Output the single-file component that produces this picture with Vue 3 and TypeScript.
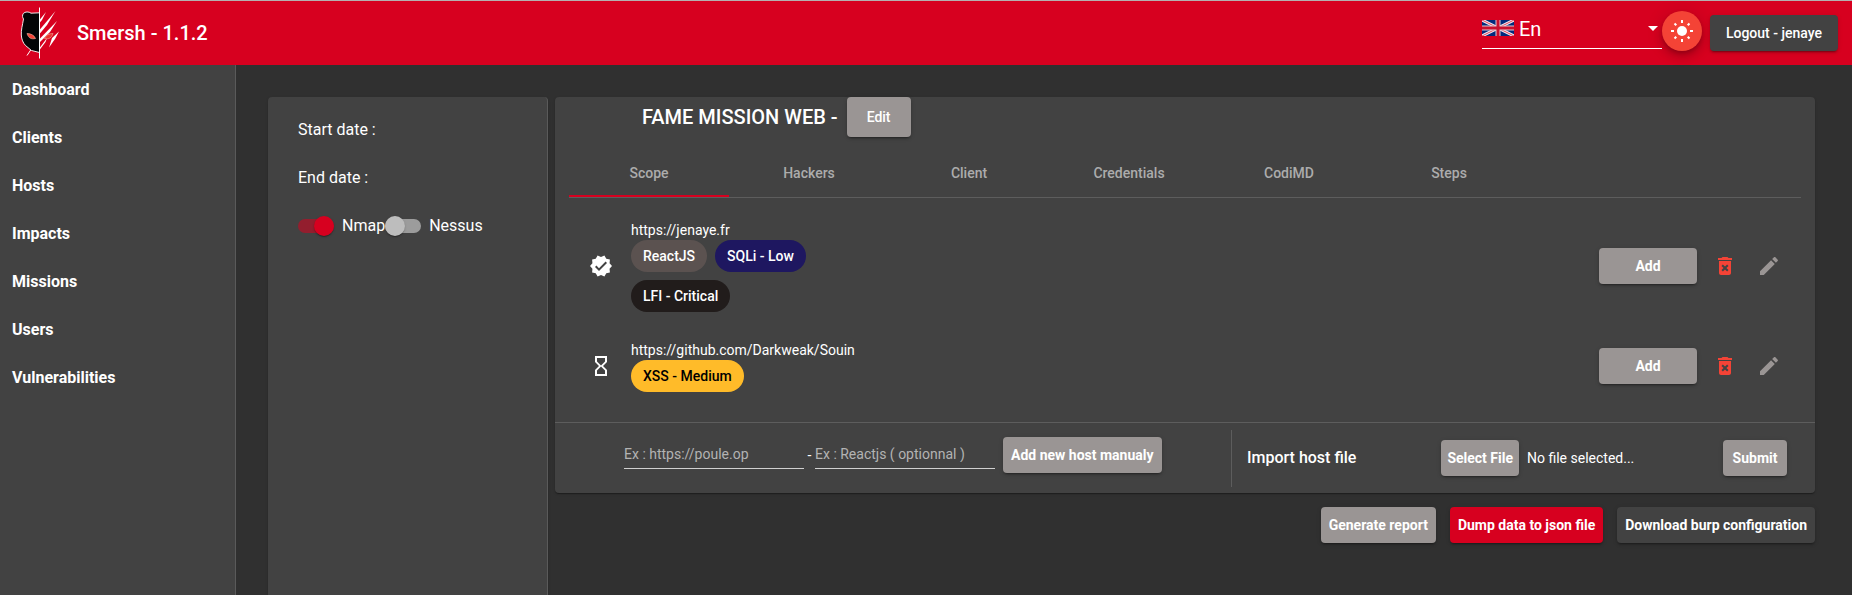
<script setup lang="ts">
import { ref } from 'vue'

interface Tag { label: string; tone: string }
interface Host { url: string; checked: boolean; tags: Tag[] }

const links: string[] = ['Dashboard', 'Clients', 'Hosts', 'Impacts', 'Missions', 'Users', 'Vulnerabilities']
const tabs: string[] = ['Scope', 'Hackers', 'Client', 'Credentials', 'CodiMD', 'Steps']
const activeTab = ref('Scope')
const language = ref('En')
const nmap = ref(true)
const nessus = ref(false)
const hostUrl = ref('')
const technology = ref('')

const hosts: Host[] = [
  {
    url: 'https://jenaye.fr',
    checked: true,
    tags: [
      { label: 'ReactJS', tone: 'tech' },
      { label: 'SQLi - Low', tone: 'low' },
      { label: 'LFI - Critical', tone: 'critical' },
    ],
  },
  {
    url: 'https://github.com/Darkweak/Souin',
    checked: false,
    tags: [{ label: 'XSS - Medium', tone: 'medium' }],
  },
]
</script>

<template>
  <div class="app">
    <header class="toolbar">
      <svg class="logo" viewBox="0 0 40 52" aria-hidden="true">
        <path d="M19.500 5.800L11 6.200C9 4.500 5 4.500 3.300 6.500C2 8.500 2.500 10.500 3.500 12C2.500 18 1 23 1.300 28C1.500 32 3 36 5.500 38.500L11.500 43.500L19.500 45.500Z" fill="#020405" stroke="#fff" stroke-width=".9" />
        <path d="M19.500 .5V51.500M10.700 43L7 48.500" stroke="#fff" stroke-width="1" fill="none" />
        <g fill="#fff">
          <path d="M19.500 13L26 5L22 13L19.500 16Z" />
          <path d="M19.500 23L35.500 4L27 18L19.500 27Z" />
          <path d="M19.500 32L37 14L30 25L19.500 35.500Z" />
          <path d="M19.500 41L27 31L25.500 35L19.500 43Z" />
          <path d="M32 31L39 24.500L35 32L29 40.500Z" />
        </g>
        <path d="M7 26.500C11 26.500 14.500 28.500 15.500 31.500C11 32.500 8.500 31 7 26.500Z" fill="#f44336" stroke="#f7b5a5" stroke-width=".6" />
        <path d="M33 26.500C29 26.500 25.500 28.500 24.500 31.500C29 32.500 31.500 31 33 26.500Z" fill="#e8322c" stroke="#f7b5a5" stroke-width=".6" />
      </svg>
      <h1 class="brand">Smersh - 1.1.2</h1>
      <div class="language">
        <svg class="flag" viewBox="0 0 32 16" aria-hidden="true">
          <rect width="32" height="16" fill="#012a7d" />
          <path d="M0 0L32 16M32 0L0 16" stroke="#f3e8ee" stroke-width="3" />
          <path d="M0 0L32 16M32 0L0 16" stroke="#e0455c" stroke-width="1" />
          <path d="M16 0V16M0 8H32" stroke="#e0c8d0" stroke-width="5" />
          <path d="M16 0V16M0 8H32" stroke="#c8102e" stroke-width="3" />
        </svg>
        <select v-model="language" aria-label="Language">
          <option>En</option>
          <option>Fr</option>
        </select>
        <svg class="caret" viewBox="0 0 10 5" aria-hidden="true"><path d="M0 0H10L5 5Z" fill="#fff" /></svg>
      </div>
      <button class="theme" type="button" aria-label="Toggle theme">
        <svg viewBox="0 0 24 24" aria-hidden="true">
          <circle cx="12" cy="12" r="5" fill="#fff" />
          <path d="M12 1V4M12 20V23M1 12H4M20 12H23M4.500 4.500L6.300 6.300M17.700 17.700L19.500 19.500M4.500 19.500L6.300 17.700M17.700 6.300L19.500 4.500" stroke="#fff" stroke-width="2" />
        </svg>
      </button>
      <button class="btn dark" type="button">Logout - jenaye</button>
    </header>

    <div class="body">
      <nav class="sidebar">
        <a v-for="link in links" :key="link" href="#">{{ link }}</a>
      </nav>

      <main class="content">
        <aside class="card details">
          <p>Start date :</p>
          <p>End date :</p>
          <div class="toggles">
            <label><input v-model="nmap" type="checkbox" role="switch" />Nmap</label>
            <label><input v-model="nessus" type="checkbox" role="switch" />Nessus</label>
          </div>
        </aside>

        <div class="mission">
          <section class="card">
            <div class="title">
              <h2>FAME MISSION WEB -</h2>
              <button class="btn grey edit" type="button">Edit</button>
            </div>

            <div class="tabs" role="tablist">
              <button
                v-for="tab in tabs"
                :key="tab"
                type="button"
                role="tab"
                :aria-selected="tab === activeTab"
                :class="{ active: tab === activeTab }"
                @click="activeTab = tab"
              >{{ tab }}</button>
            </div>

            <ul class="hosts">
              <li v-for="host in hosts" :key="host.url">
                <svg class="icon" viewBox="0 0 24 24" aria-hidden="true">
                  <path v-if="host.checked" d="M23 12l-2.440-2.780.340-3.680-3.610-.820-1.890-3.180L12 3 8.600 1.540 6.710 4.720l-3.610.810.340 3.680L1 12l2.440 2.780-.340 3.690 3.610.820 1.890 3.180L12 21l3.400 1.460 1.890-3.180 3.610-.820-.340-3.680L23 12zm-13 5l-4-4 1.410-1.410L10 14.170l6.590-6.590L18 9l-8 8z" />
                  <path v-else d="M6 2v6h.010L6 8.010 10 12l-4 4 .010.010H6V22h12v-5.990h-.010L18 16l-4-4 4-3.990-.010-.010H18V2H6zm10 14.500V20H8v-3.500l4-4 4 4zm-4-5l-4-4V4h8v3.500l-4 4z" />
                </svg>
                <div class="target">
                  <span class="url">{{ host.url }}</span>
                  <div class="chips">
                    <span v-for="tag in host.tags" :key="tag.label" class="chip" :class="tag.tone">{{ tag.label }}</span>
                  </div>
                </div>
                <button class="btn grey strong add" type="button">Add</button>
                <button class="icon-btn delete" type="button" aria-label="Delete host">
                  <svg class="icon" viewBox="0 0 24 24"><path d="M6 19c0 1.100.900 2 2 2h8c1.100 0 2-.900 2-2V7H6v12zm2.460-7.120l1.410-1.410L12 12.590l2.120-2.120 1.410 1.410L13.410 14l2.120 2.120-1.410 1.410L12 15.410l-2.120 2.120-1.410-1.410L10.590 14l-2.130-2.120zM15.500 4l-1-1h-5l-1 1H5v2h14V4z" /></svg>
                </button>
                <button class="icon-btn modify" type="button" aria-label="Edit host">
                  <svg class="icon" viewBox="0 0 24 24"><path d="M3 17.250V21h3.750L17.810 9.940l-3.750-3.750L3 17.250zM20.710 7.040c.390-.390.390-1.020 0-1.410l-2.340-2.340c-.390-.390-1.020-.390-1.410 0l-1.830 1.830 3.750 3.750 1.830-1.830z" /></svg>
                </button>
              </li>
            </ul>

            <div class="host-forms">
              <form class="manual" @submit.prevent>
                <input v-model="hostUrl" type="text" aria-label="Host" placeholder="Ex : https://poule.op" />
                <span>-</span>
                <input v-model="technology" type="text" aria-label="Technology" placeholder="Ex : Reactjs ( optionnal )" />
                <button class="btn grey strong compact" type="submit">Add new host manualy</button>
              </form>
              <form class="import" @submit.prevent>
                <h3>Import host file</h3>
                <button class="btn grey strong select-file" type="button">Select File</button>
                <span class="file">No file selected...</span>
                <button class="btn grey strong submit" type="submit">Submit</button>
              </form>
            </div>
          </section>

          <div class="exports">
            <button class="btn grey strong compact" type="button">Generate report</button>
            <button class="btn red strong compact" type="button">Dump data to json file</button>
            <button class="btn dark strong compact" type="button">Download burp configuration</button>
          </div>
        </div>
      </main>
    </div>
  </div>
</template>

<style>
body {
  margin: 0;
  background: #303030;
}
</style>

<style scoped>
* {
  box-sizing: border-box;
}
.app {
  display: flex;
  flex-direction: column;
  min-height: 100vh;
  font: 400 14px/20px Roboto, "Liberation Sans", sans-serif;
  color: #fff;
}
h1, h2, h3, p, ul {
  margin: 0;
  padding: 0;
}
button, input, select {
  font: inherit;
  color: inherit;
}
button {
  border: 0;
  padding: 0;
  background: none;
  cursor: pointer;
}
.toolbar {
  display: flex;
  align-items: center;
  height: 65px;
  padding: 0 14px 0 20px;
  border-top: 1px solid #b5b0b0;
  background: #d7001f;
}
.logo {
  width: 40px;
  height: 52px;
}
.brand {
  margin-left: 17px;
  font-size: 20px;
  font-weight: 500;
}
.language {
  display: flex;
  align-items: center;
  position: relative;
  width: 180px;
  height: 40px;
  margin: 0 0 8px auto;
  border-bottom: 1px solid #fff;
}
.flag {
  position: absolute;
  left: 0;
  top: 11px;
  width: 32px;
  height: 16px;
}
.caret {
  position: absolute;
  right: 4px;
  top: 17px;
  width: 10px;
  height: 5px;
  pointer-events: none;
}
select {
  width: 100%;
  height: 36px;
  padding: 0 20px 0 37px;
  border: 0;
  background: transparent;
  appearance: none;
  font-size: 20px;
}
option {
  background: #424242;
}
.theme {
  display: grid;
  place-items: center;
  width: 40px;
  height: 40px;
  margin: 0 8px 4px 0;
  border-radius: 50%;
  background: #f44336;
  box-shadow: 0 3px 5px -1px rgba(0, 0, 0, .2), 0 6px 10px rgba(0, 0, 0, .14), 0 1px 18px rgba(0, 0, 0, .12);
}
.theme svg {
  width: 24px;
  height: 24px;
}
.btn {
  flex: none;
  height: 36px;
  padding: 0 16px;
  border-radius: 4px;
  font-weight: 500;
  white-space: nowrap;
  box-shadow: 0 3px 1px -2px rgba(0, 0, 0, .2), 0 2px 2px rgba(0, 0, 0, .14), 0 1px 5px rgba(0, 0, 0, .12);
}
.btn.strong {
  font-weight: 700;
}
.btn.compact {
  padding: 0 8px;
}
.btn.select-file {
  padding: 0 6px;
}
.grey {
  background: #9a9594;
}
.red {
  background: #d7001f;
}
.dark {
  background: #424242;
}
.body {
  display: flex;
  flex: 1;
}
.sidebar {
  display: flex;
  flex-direction: column;
  flex: none;
  width: 236px;
  padding-top: 1px;
  border-right: 1px solid #5a5a5a;
  background: #424242;
}
.sidebar a {
  padding: 0 12px;
  font-size: 16px;
  font-weight: 700;
  line-height: 48px;
  color: #fff;
  text-decoration: none;
}
.content {
  display: flex;
  flex: 1;
  gap: 7px;
  min-width: 0;
  padding: 32px 37px 0 32px;
}
.card {
  border-radius: 4px;
  background: #424242;
  box-shadow: 0 2px 1px -1px rgba(0, 0, 0, .2), 0 1px 1px rgba(0, 0, 0, .14), 0 1px 3px rgba(0, 0, 0, .12);
}
.details {
  flex: none;
  width: 280px;
  padding: 9px 30px;
  border-right: 1px solid #5a5a5a;
  border-radius: 4px 4px 0 0;
  font-size: 16px;
  line-height: 48px;
}
.toggles, .toggles label {
  display: flex;
  align-items: center;
}
.toggles input {
  display: flex;
  align-items: center;
  width: 36px;
  height: 14px;
  margin: 0 8px 0 0;
  border-radius: 7px;
  background: #9c9c9c;
  appearance: none;
}
.toggles input::before {
  content: "";
  flex: none;
  width: 20px;
  height: 20px;
  border-radius: 50%;
  background: #bdbdbd;
  box-shadow: 0 2px 1px -1px rgba(0, 0, 0, .2), 0 1px 1px rgba(0, 0, 0, .14), 0 1px 3px rgba(0, 0, 0, .12);
}
.toggles input:checked {
  justify-content: flex-end;
  background: #931e2e;
}
.toggles input:checked::before {
  background: #d7001f;
}
.mission {
  flex: 1;
  min-width: 0;
}
.title {
  display: flex;
  align-items: center;
  gap: 9px;
  padding-left: 87px;
}
h2 {
  font-size: 20px;
  font-weight: 500;
}
.edit {
  width: 64px;
  height: 40px;
}
.tabs {
  display: flex;
  height: 49px;
  margin: 12px 14px 0;
  border-bottom: 1px solid #5d5d5d;
}
.tabs button {
  width: 160px;
  padding-top: 2px;
  border-bottom: 2px solid transparent;
  font-weight: 500;
  color: #acacac;
}
.tabs .active {
  border-bottom-color: #d7001f;
}
.hosts {
  display: grid;
  gap: 28px;
  padding: 22px 34px 30px;
  list-style: none;
}
.hosts li {
  display: flex;
  align-items: center;
}
.icon {
  display: block;
  width: 24px;
  height: 24px;
  fill: currentColor;
}
.target {
  width: 240px;
  margin: 0 auto 0 18px;
}
.url {
  display: block;
}
.chips {
  display: flex;
  flex-wrap: wrap;
  gap: 8px;
}
.chip {
  padding: 0 12px;
  border-radius: 16px;
  font-weight: 500;
  line-height: 32px;
}
.tech {
  background: #5b5250;
}
.low {
  background: #1e1760;
}
.critical {
  background: #211c1b;
}
.medium {
  background: #ffbb29;
  color: #000;
}
.add {
  width: 98px;
}
.icon-btn {
  margin-left: 20px;
}
.add + .icon-btn {
  margin-left: 16px;
}
.delete {
  color: #f44336;
}
.modify {
  color: #9a9594;
}
.host-forms {
  display: flex;
  align-items: center;
  padding: 7px 28px 6px 69px;
  border-top: 1px solid #5d5d5d;
}
.manual, .import {
  display: flex;
  align-items: center;
}
.manual {
  flex: 1;
  padding-bottom: 7px;
}
.manual input {
  width: 180px;
  height: 30px;
  margin: 0 0 2px;
  padding: 0;
  border: 0;
  border-bottom: 1px solid #d0d0d0;
  outline: 0;
  background: transparent;
}
.manual input::placeholder {
  color: #b3b3b3;
}
.manual span {
  width: 11px;
  text-align: center;
}
.manual .btn {
  margin-left: 8px;
}
.import {
  width: 556px;
  height: 57px;
  padding: 0 0 1px 15px;
  border-left: 1px solid #5d5d5d;
}
h3 {
  flex: 1;
  font-size: 16px;
  font-weight: 500;
}
.file {
  width: 188px;
  margin: 0 0 0 8px;
}
.import .submit {
  width: 64px;
  padding: 0;
  margin-left: 8px;
}
.exports {
  display: flex;
  justify-content: flex-end;
  gap: 14px;
  padding: 14px 0;
}
</style>
